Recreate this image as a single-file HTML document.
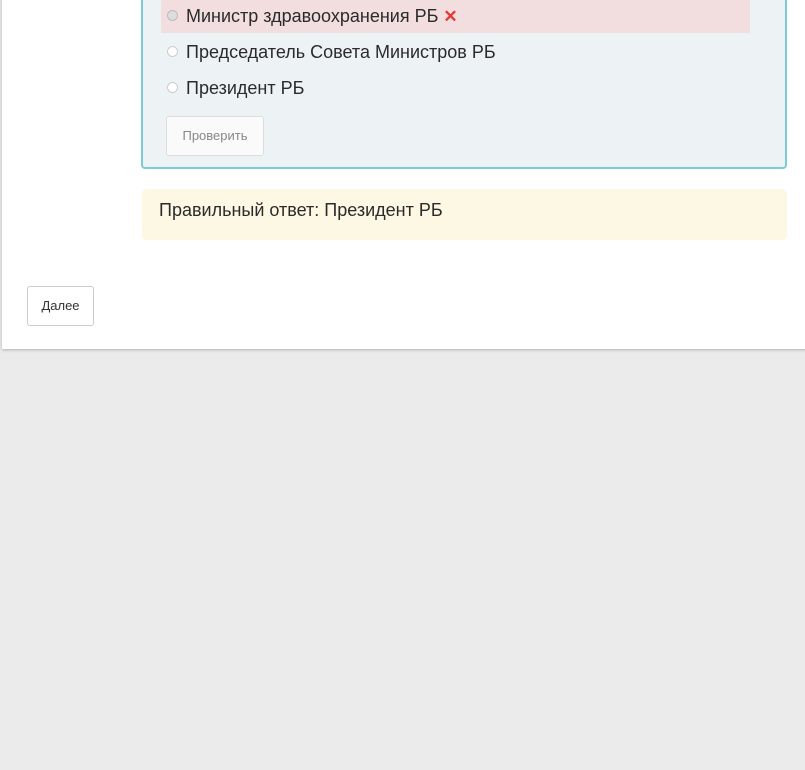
<!DOCTYPE html>
<html><head><meta charset="utf-8"><style>
body{margin:0;width:805px;height:770px;background:#ebebeb;font-family:"Liberation Sans",sans-serif;position:relative;overflow:hidden}
.card{position:absolute;left:2px;top:-10px;width:810px;height:359px;background:#fff;box-shadow:0 1px 3px rgba(0,0,0,.25)}
.quiz{position:absolute;left:141px;top:-20px;width:642px;height:185px;background:#edf3f5;border:2px solid #7ccbd6;border-radius:4px}
.row{position:absolute;left:161px;height:33px;width:589px;font-size:18px;color:#2b2b2b;line-height:33px}
.row .r{position:absolute;left:6px;top:10px;width:11px;height:11px;border:1px solid #ccc;border-radius:50%;background:#fff;box-sizing:border-box}
.row span.t{position:absolute;left:25px}
.btn{position:absolute;background:#fff;border:1px solid #ccc;border-radius:3px;font-size:13px;text-align:center;box-sizing:border-box}
.fb{position:absolute;left:142px;top:189px;width:645px;height:51px;background:#fcf8e3;border-radius:5px;font-size:18px;color:#2b2b2b;line-height:42px;padding-left:17px;box-sizing:border-box}
</style></head><body>
<div class="card"></div>
<div class="quiz"></div>
<div class="row" style="top:0;background:#f2dede"><div class="r" style="background:#ddd;border-color:#bbb"></div><span class="t">Министр здравоохранения РБ <span style="color:#e53935;font-weight:bold;font-size:17px">✕</span></span></div>
<div class="row" style="top:36px"><div class="r"></div><span class="t">Председатель Совета Министров РБ</span></div>
<div class="row" style="top:72px"><div class="r"></div><span class="t">Президент РБ</span></div>
<div class="btn" style="left:166px;top:116px;width:98px;height:40px;line-height:38px;color:#888;background:#fafafa;border-color:#ddd">Проверить</div>
<div class="fb">Правильный ответ: Президент РБ</div>
<div class="btn" style="left:27px;top:286px;width:67px;height:40px;line-height:38px;color:#333">Далее</div>
</body></html>
